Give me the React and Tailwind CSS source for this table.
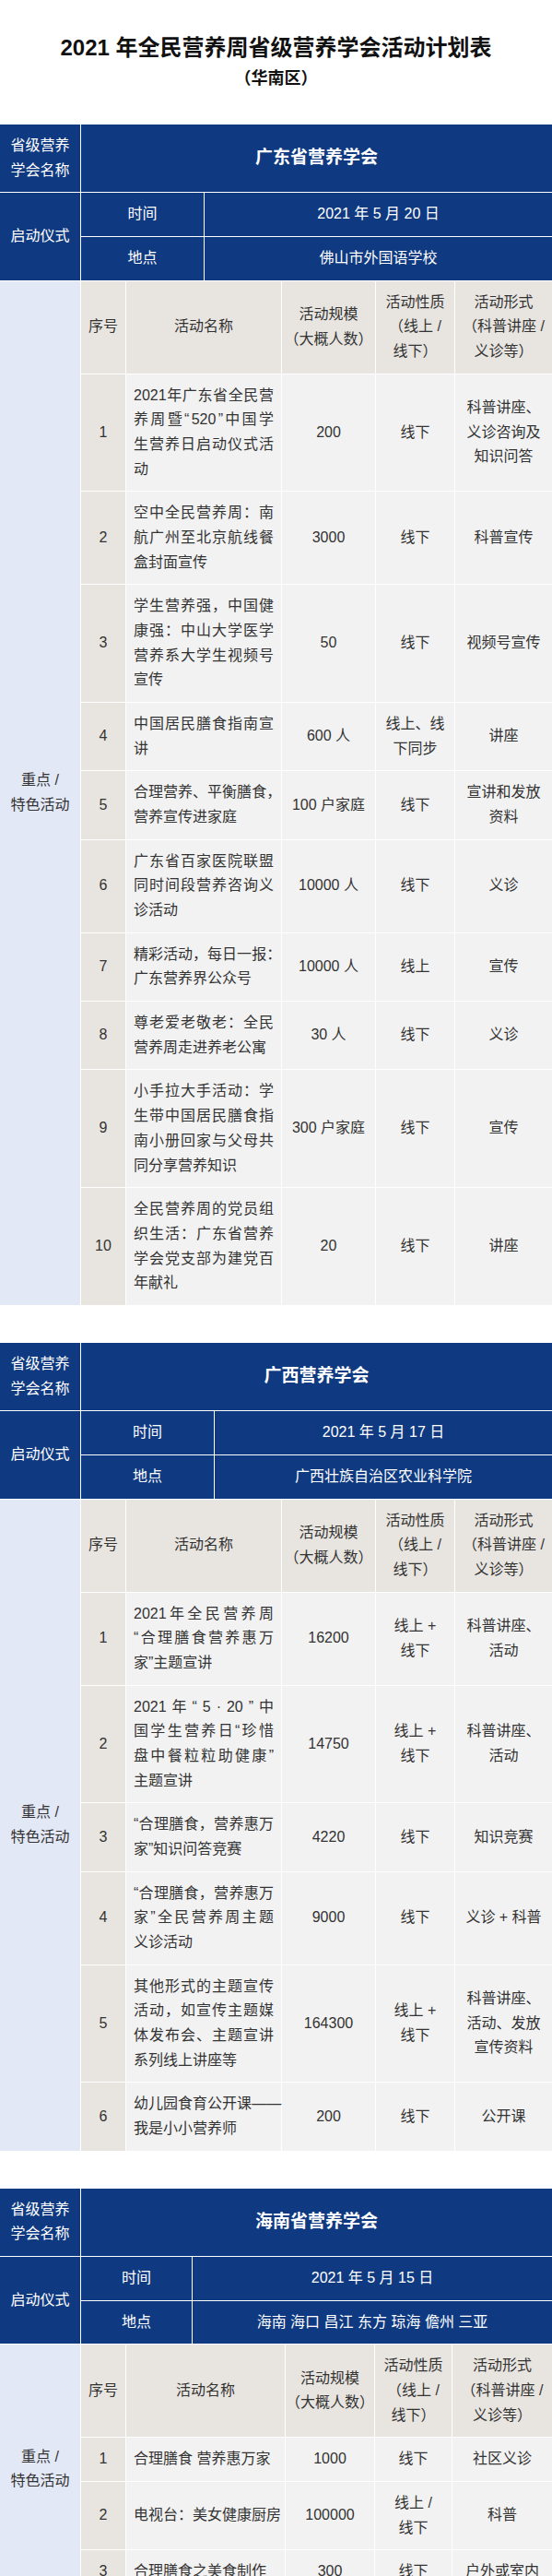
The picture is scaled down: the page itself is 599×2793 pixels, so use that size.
import React from 'react';

const sections = [
    {
        name: '广东省营养学会',
        date: '2021 年 5 月 20 日',
        place: '佛山市外国语学校',
        launchCols: 'grid-cols-[133px_1fr]',
        actCols: 'grid-cols-[48px_168px_101px_85px_1fr]',
        rows: [
            { no: '1', name: ['2021 年广东省全民营', '养周暨“520”中国学', '生营养日启动仪式活', '动'], scale: '200', nature: '线下', form: ['科普讲座、', '义诊咨询及', '知识问答'] },
            { no: '2', name: ['空中全民营养周：南', '航广州至北京航线餐', '盒封面宣传'], scale: '3000', nature: '线下', form: '科普宣传' },
            { no: '3', name: ['学生营养强，中国健', '康强：中山大学医学', '营养系大学生视频号', '宣传'], scale: '50', nature: '线下', form: '视频号宣传' },
            { no: '4', name: ['中国居民膳食指南宣', '讲'], scale: '600 人', nature: ['线上、线', '下同步'], form: '讲座' },
            { no: '5', name: ['合理营养、平衡膳食，', '营养宣传进家庭'], scale: '100 户家庭', nature: '线下', form: ['宣讲和发放', '资料'] },
            { no: '6', name: ['广东省百家医院联盟', '同时间段营养咨询义', '诊活动'], scale: '10000 人', nature: '线下', form: '义诊' },
            { no: '7', name: ['精彩活动，每日一报：', '广东营养界公众号'], scale: '10000 人', nature: '线上', form: '宣传' },
            { no: '8', name: ['尊老爱老敬老：全民', '营养周走进养老公寓'], scale: '30 人', nature: '线下', form: '义诊' },
            { no: '9', name: ['小手拉大手活动：学', '生带中国居民膳食指', '南小册回家与父母共', '同分享营养知识'], scale: '300 户家庭', nature: '线下', form: '宣传' },
            { no: '10', name: ['全民营养周的党员组', '织生活：广东省营养', '学会党支部为建党百', '年献礼'], scale: '20', nature: '线下', form: '讲座' },
        ],
    },
    {
        name: '广西营养学会',
        date: '2021 年 5 月 17 日',
        place: '广西壮族自治区农业科学院',
        launchCols: 'grid-cols-[144px_1fr]',
        actCols: 'grid-cols-[48px_168px_101px_85px_1fr]',
        rows: [
            { no: '1', name: ['2021 年全民营养周', '“合理膳食 营养惠万', '家”主题宣讲'], scale: '16200', nature: ['线上 +', '线下'], form: ['科普讲座、', '活动'] },
            { no: '2', name: ['2021 年“5 · 20”中', '国学生营养日“珍惜', '盘中餐 粒粒助健康”', '主题宣讲'], scale: '14750', nature: ['线上 +', '线下'], form: ['科普讲座、', '活动'] },
            { no: '3', name: ['“合理膳食，营养惠万', '家”知识问答竞赛'], scale: '4220', nature: '线下', form: '知识竞赛' },
            { no: '4', name: ['“合理膳食，营养惠万', '家”全民营养周主题', '义诊活动'], scale: '9000', nature: '线下', form: '义诊 + 科普' },
            { no: '5', name: ['其他形式的主题宣传', '活动，如宣传主题媒', '体发布会、主题宣讲', '系列线上讲座等'], scale: '164300', nature: ['线上 +', '线下'], form: ['科普讲座、', '活动、发放', '宣传资料'] },
            { no: '6', name: ['幼儿园食育公开课——', '我是小小营养师'], scale: '200', nature: '线下', form: '公开课' },
        ],
    },
    {
        name: '海南省营养学会',
        date: '2021 年 5 月 15 日',
        place: '海南 海口 昌江 东方 琼海 儋州 三亚',
        launchCols: 'grid-cols-[120px_1fr]',
        actCols: 'grid-cols-[48px_172px_96px_83px_1fr]',
        rows: [
            { no: '1', name: ['合理膳食 营养惠万家'], scale: '1000', nature: '线下', form: '社区义诊' },
            { no: '2', name: ['电视台：美女健康厨房'], scale: '100000', nature: ['线上 /', '线下'], form: '科普' },
            { no: '3', name: ['合理膳食之美食制作'], scale: '300', nature: '线下', form: '户外或室内' },
        ],
    },
];

function Cell({ lines, className = '' }) {
    const list = Array.isArray(lines) ? lines : [lines];
    return (
        <div className={`flex flex-col items-center justify-center px-1.5 py-[10px] text-center ${className}`}>
            {list.map((l, i) => (
                <div key={i} className="whitespace-nowrap">{l}</div>
            ))}
        </div>
    );
}

function NameCell({ lines }) {
    return (
        <div className="flex flex-col justify-center bg-[#f2f2f2] px-2 py-[10px]">
            {lines.map((l, i) =>
                i < lines.length - 1 ? (
                    <div key={i} className="flex justify-between whitespace-nowrap">
                        {l.match(/[\x21-\x7e]+|\S/gu).map((t, j) => (
                            <span key={j}>{t}</span>
                        ))}
                    </div>
                ) : (
                    <div key={i} className="whitespace-nowrap">{l}</div>
                )
            )}
        </div>
    );
}

function Section({ data }) {
    return (
        <div className="grid grid-cols-[87px_1fr] gap-px bg-white text-[16px] leading-[26.67px]">
            <Cell lines={['省级营养', '学会名称']} className="bg-[#0f3a81] text-white" />
            <div className="flex items-center justify-center bg-[#0f3a81] text-[19px] font-bold text-white">
                {data.name}
            </div>

            <Cell lines="启动仪式" className="bg-[#0f3a81] text-white" />
            <div className={`grid ${data.launchCols} gap-px bg-white text-white`}>
                <Cell lines="时间" className="bg-[#0f3a81]" />
                <Cell lines={data.date} className="bg-[#0f3a81]" />
                <Cell lines="地点" className="bg-[#0f3a81]" />
                <Cell lines={data.place} className="bg-[#0f3a81]" />
            </div>

            <Cell lines={['重点 /', '特色活动']} className="bg-[#e3e8f6] text-[#333]" />
            <div className={`grid ${data.actCols} gap-px bg-white text-[#333]`}>
                <Cell lines="序号" className="bg-[#e8e5e0]" />
                <Cell lines="活动名称" className="bg-[#e8e5e0]" />
                <Cell lines={['活动规模', '（大概人数）']} className="bg-[#e8e5e0]" />
                <Cell lines={['活动性质', '（线上 /', '线下）']} className="bg-[#e8e5e0]" />
                <Cell lines={['活动形式', '（科普讲座 /', '义诊等）']} className="bg-[#e8e5e0]" />
                {data.rows.map((r) => (
                    <React.Fragment key={r.no}>
                        <Cell lines={r.no} className="bg-[#e8e5e0]" />
                        <NameCell lines={r.name} />
                        <Cell lines={r.scale} className="bg-[#f2f2f2]" />
                        <Cell lines={r.nature} className="bg-[#f2f2f2]" />
                        <Cell lines={r.form} className="bg-[#f2f2f2]" />
                    </React.Fragment>
                ))}
            </div>
        </div>
    );
}

export default function App() {
    return (
        <div className="w-[599px] bg-white [font-family:'Liberation_Sans','Noto_Sans_CJK_SC',sans-serif]">
            <div className="pt-[36px] pb-[37px] text-center font-bold text-[#111]">
                <h1 className="text-[24px] leading-[32px]">2021 年全民营养周省级营养学会活动计划表</h1>
                <p className="mt-[4px] text-[18px] leading-[26px]">（华南区）</p>
            </div>
            <div className="flex flex-col gap-[41px]">
                {sections.map((s) => (
                    <Section key={s.name} data={s} />
                ))}
            </div>
        </div>
    );
}
